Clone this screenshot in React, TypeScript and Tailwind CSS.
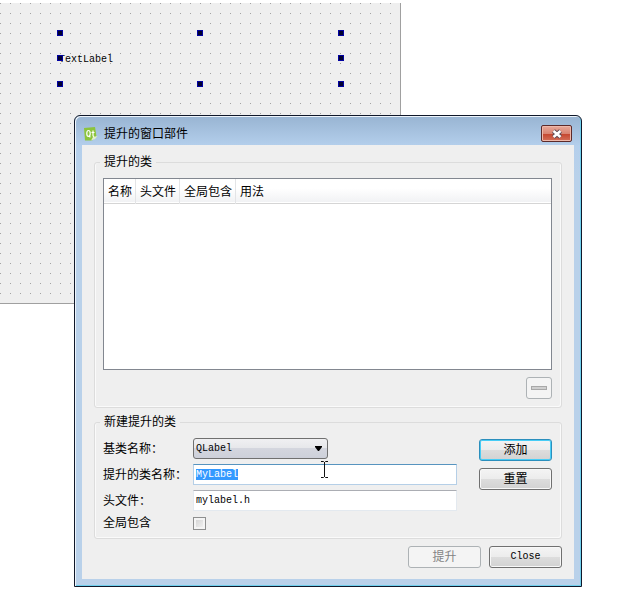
import React, { useEffect, useRef } from "react";

const handles = [
  { x: "left-[57px]", y: "top-[27px]" },
  { x: "left-[197px]", y: "top-[27px]" },
  { x: "left-[338px]", y: "top-[27px]" },
  { x: "left-[57px]", y: "top-[52px]" },
  { x: "left-[338px]", y: "top-[52px]" },
  { x: "left-[57px]", y: "top-[78px]" },
  { x: "left-[197px]", y: "top-[78px]" },
  { x: "left-[338px]", y: "top-[78px]" },
];

const columns = ["名称", "头文件", "全局包含", "用法"];

const mono = "font-['Liberation_Mono','Noto_Sans_CJK_SC',monospace] text-[10px]";
const inputStyle = `${mono} h-[21px] w-full bg-white px-[2px] text-black outline-none border`;
const buttonStyle =
  "h-[22px] w-[73px] rounded-[3px] border leading-none flex items-center justify-center";
const buttonFace = "bg-[linear-gradient(#f4f4f4,#ececec_50%,#dddddd_50%,#d2d2d2)]";
const plainEdge = "border-[#707070] shadow-[inset_0_0_0_1px_#f8f8f8]";
const defaultEdge = "border-[#2b8fbd] shadow-[inset_0_0_0_1px_#48cdf6]";

// form being edited in the designer
const FormCanvas = () => (
  <div className="absolute left-0 top-[3px] h-[301px] w-[401px] border-b border-r border-[#a0a0a0] bg-[#efefef]">
    <svg className="absolute inset-0 h-full w-full" aria-hidden="true">
      <defs>
        <pattern id="dots" width="10" height="10" patternUnits="userSpaceOnUse">
          <rect width="1" height="1" fill="#a3a3a3" />
        </pattern>
      </defs>
      <rect width="100%" height="100%" fill="url(#dots)" />
    </svg>
    <span className={`${mono} absolute left-[59px] top-[51px] leading-3 text-black`}>
      TextLabel
    </span>
    {handles.map(({ x, y }) => (
      <i key={x + y} className={`absolute size-[6px] border border-[#0000a0] bg-[#000030] ${x} ${y}`} />
    ))}
  </div>
);

const QtIcon = () => (
  <svg width="14" height="16" viewBox="0 0 14 16" aria-hidden="true">
    <path d="M0 2L11 1l1.500 9.500L8 14.500H1z" fill="#8cc43c" />
    <path d="M7 14.500l2-3.500L13.500 10 11 13z" fill="#e2f0cc" />
    <ellipse cx="4.500" cy="7.500" rx="1.700" ry="3" fill="none" stroke="#fff" strokeWidth="1.200" />
    <path d="M5 9.500l1.300 1.800M9 4.500v5q0 1 1.200 1M7.500 6.500h3" fill="none" stroke="#fff" strokeWidth="1.200" />
  </svg>
);

const Group = ({ title, children }: { title: string; children: React.ReactNode }) => (
  <fieldset className="min-w-0 rounded-[3px] border border-[#dcdcdc] pb-2 pl-2 pr-[9px] pt-2 shadow-[inset_1px_0_0_#fafafa,inset_-1px_-1px_0_#fafafa]">
    <legend className="-ml-[3px] h-4 px-1 leading-4">{title}</legend>
    {children}
  </fieldset>
);

const App = () => {
  const nameRef = useRef<HTMLInputElement>(null);

  useEffect(() => {
    nameRef.current?.focus();
    nameRef.current?.select();
  }, []);

  return (
    <div
      lang="zh-CN"
      className="relative flow-root min-h-screen overflow-hidden bg-white font-['Liberation_Sans','Noto_Sans_CJK_SC',sans-serif] text-xs text-black"
    >
      <FormCanvas />
      <section
        aria-label="提升的窗口部件"
        className="relative ml-[74px] mr-[38px] mt-[115px] rounded-t-[6px] border border-[#10182a] bg-[#b9d1ea] bg-[linear-gradient(#98b4d2,#b4cfec_30px,#b9d1ea_60px)] px-[7px] pb-[7px] shadow-[inset_1px_1px_0_#eef5fc,inset_-1px_-1px_0_#6fd0ee]"
      >
        <header className="flex h-[29px] items-center pl-[2px] pt-[6px]">
          <QtIcon />
          <h1 className="ml-[6px] flex-1 leading-4">提升的窗口部件</h1>
          <button
            aria-label="关闭"
            className="mr-[2px] flex h-[17px] w-[31px] items-center justify-center rounded-[2px] border border-[#5c2a2a] bg-[linear-gradient(#e8a99a,#d98472_50%,#c4432c_50%,#d4705a)] shadow-[inset_0_0_0_1px_#eeb8aa]"
          >
            <svg width="12" height="10" viewBox="0 0 12 10" aria-hidden="true">
              <path d="M2.500 2l7 6M9.500 2l-7 6" stroke="#5a4a55" strokeWidth="4.400" />
              <path d="M2.500 2l7 6M9.500 2l-7 6" stroke="#fff" strokeWidth="2.600" />
            </svg>
          </button>
        </header>

        <div className="bg-[#efefef] px-3 pb-[11px] pt-[9px]">
          <Group title="提升的类">
            <div className="h-48 border border-[#828790] bg-white">
              <table className="w-full">
                <thead>
                  <tr className="h-6 border-b border-[#d5d5d5] bg-[linear-gradient(#fff_40%,#f1f2f4)]">
                    {columns.map((column) => (
                      <th
                        key={column}
                        className="w-px whitespace-nowrap border-r border-[#e3e4e6] pb-0 pl-1 pr-[3px] pt-[2px] text-left font-normal last:w-auto last:border-r-0"
                      >
                        {column}
                      </th>
                    ))}
                  </tr>
                </thead>
              </table>
            </div>
            <div className="mt-[7px] flex justify-end">
              <button
                aria-label="删除"
                disabled
                className="flex h-[22px] w-[26px] items-center justify-center rounded-[3px] border border-[#adb2b5] bg-[#f4f4f4]"
              >
                <span className="h-1 w-4 border border-[#a8a8a8] bg-[#cfcfcf]" />
              </button>
            </div>
          </Group>

          <div className="mt-[6px]">
            <Group title="新建提升的类">
              <div className="flex gap-[22px]">
                <div className="grid flex-1 grid-cols-[90px_1fr] items-center gap-y-[5px]">
                  <label htmlFor="base">基类名称：</label>
                  <div className="relative w-[135px]">
                    <select
                      id="base"
                      className={`${mono} block h-[21px] w-full appearance-none rounded-[3px] border border-[#707070] bg-[linear-gradient(#f0f0f2,#e6e7ea_50%,#d4d6de_50%,#cdd0da)] px-[2px] text-black outline-none`}
                    >
                      <option>QLabel</option>
                    </select>
                    <svg className="pointer-events-none absolute right-[6px] top-2" width="7" height="5" aria-hidden="true">
                      <path d="M0 0h7v1L4 5H3L0 1z" fill="#000" />
                    </svg>
                  </div>
                  <label htmlFor="name">提升的类名称：</label>
                  <input
                    id="name"
                    ref={nameRef}
                    defaultValue="MyLabel"
                    className={`${inputStyle} border-[#b5cfe7] border-t-[#5794bf] selection:bg-[#3399ff] selection:text-white`}
                  />
                  <label htmlFor="header">头文件：</label>
                  <input
                    id="header"
                    defaultValue="mylabel.h"
                    className={`${inputStyle} border-[#e3e9ef] border-t-[#abadb3]`}
                  />
                  <label htmlFor="global" className="leading-[14px]">全局包含</label>
                  <input
                    id="global"
                    type="checkbox"
                    className="size-[13px] appearance-none border border-[#8e8f8f] bg-[linear-gradient(135deg,#cfcfcf,#f6f6f6)] shadow-[inset_0_0_0_2px_#f4f4f4]"
                  />
                </div>
                <div className="flex flex-col gap-[7px] pt-px">
                  <button className={`${buttonStyle} ${buttonFace} ${defaultEdge}`}>添加</button>
                  <button className={`${buttonStyle} ${buttonFace} ${plainEdge}`}>重置</button>
                </div>
              </div>
            </Group>
          </div>

          <footer className="mt-[7px] flex justify-end gap-2">
            <button disabled className={`${buttonStyle} border-[#adb2b5] bg-[#f4f4f4] text-[#838383]`}>
              提升
            </button>
            <button className={`${buttonStyle} ${buttonFace} ${mono} ${plainEdge}`}>Close</button>
          </footer>
        </div>
      </section>

      {/* text cursor over the class name field */}
      <svg className="absolute left-[320px] top-[461px]" width="9" height="17" viewBox="0 0 9 17" aria-hidden="true">
        <path d="M1 .5h2.500l1 1 1-1H8M4.500 1v15M1 16.500h2.500l1-1 1 1H8" fill="none" stroke="#111" />
      </svg>
    </div>
  );
};

export default App;
